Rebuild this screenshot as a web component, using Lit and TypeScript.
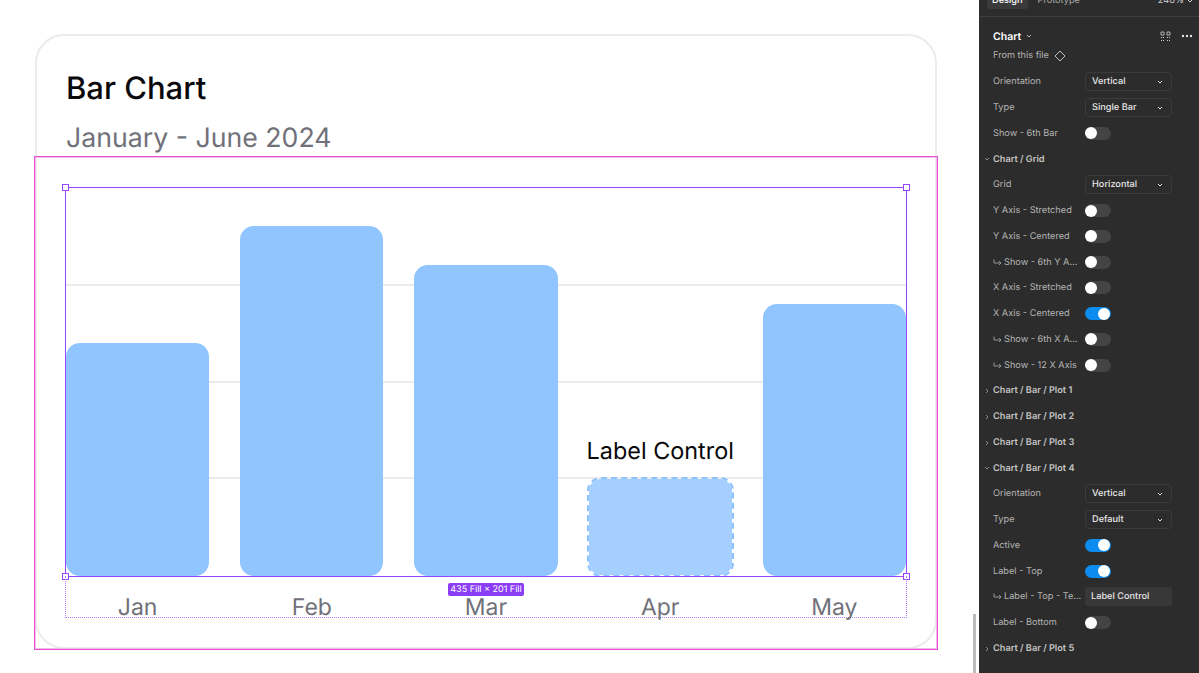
import { LitElement, html, css, svg } from "lit";
import { customElement } from "lit/decorators.js";

type Row =
  | { kind: "select"; label: string; value: string }
  | { kind: "toggle"; label: string; on?: boolean; sub?: boolean }
  | { kind: "input"; label: string; value: string; sub?: boolean }
  | { kind: "section"; label: string; open?: boolean };

const ROWS: Row[] = [
  { kind: "select", label: "Orientation", value: "Vertical" },
  { kind: "select", label: "Type", value: "Single Bar" },
  { kind: "toggle", label: "Show - 6th Bar" },
  { kind: "section", label: "Chart / Grid", open: true },
  { kind: "select", label: "Grid", value: "Horizontal" },
  { kind: "toggle", label: "Y Axis - Stretched" },
  { kind: "toggle", label: "Y Axis - Centered" },
  { kind: "toggle", label: "Show - 6th Y A...", sub: true },
  { kind: "toggle", label: "X Axis - Stretched" },
  { kind: "toggle", label: "X Axis - Centered", on: true },
  { kind: "toggle", label: "Show - 6th X A...", sub: true },
  { kind: "toggle", label: "Show - 12 X Axis", sub: true },
  { kind: "section", label: "Chart / Bar / Plot 1" },
  { kind: "section", label: "Chart / Bar / Plot 2" },
  { kind: "section", label: "Chart / Bar / Plot 3" },
  { kind: "section", label: "Chart / Bar / Plot 4", open: true },
  { kind: "select", label: "Orientation", value: "Vertical" },
  { kind: "select", label: "Type", value: "Default" },
  { kind: "toggle", label: "Active", on: true },
  { kind: "toggle", label: "Label - Top", on: true },
  { kind: "input", label: "Label - Top - Te...", value: "Label Control", sub: true },
  { kind: "toggle", label: "Label - Bottom" },
  { kind: "section", label: "Chart / Bar / Plot 5" },
];

const BARS = [
  { month: "Jan", height: 233 },
  { month: "Feb", height: 350 },
  { month: "Mar", height: 311 },
  { month: "Apr", height: 100, label: "Label Control", ghost: true },
  { month: "May", height: 272 },
];

const chevron = (open: boolean) => html`<svg class="chev" width="6" height="6" viewBox="0 0 6 6">
  ${svg`<path d=${open ? "M1 2l2 2 2-2" : "M2 1l2 2-2 2"} fill="none" stroke="currentColor" stroke-width="1"/>`}
</svg>`;

const hook = html`<svg class="hook" width="9" height="7" viewBox="0 0 9 7">
  ${svg`<path d="M1 .5V4h7M6 2l2 2-2 2" fill="none" stroke="currentColor" stroke-width=".9"/>`}
</svg>`;

@customElement("app-root")
export class AppRoot extends LitElement {
  static styles = css`
    :host {
      display: flex;
      width: 1199px;
      height: 673px;
      overflow: hidden;
      font-family: Inter, "Liberation Sans", sans-serif;
      text-rendering: geometricPrecision;
      background: #fff;
    }

    .canvas {
      position: relative;
      flex: 0 0 979px;
      padding: 34px 0 0 35px;
      box-sizing: border-box;
    }

    .scrollbar {
      position: absolute;
      left: 973px;
      top: 614px;
      bottom: 0;
      width: 3px;
      background: #bdbdbd;
    }

    .card {
      width: 902px;
      height: 615px;
      box-sizing: border-box;
      border: 2px solid #ececec;
      border-radius: 29px;
      padding: 29px 29px 0;
    }

    .title {
      font-size: 31px;
      line-height: 48px;
      font-weight: 500;
      color: #09090b;
    }

    .subtitle {
      font-size: 26.7px;
      line-height: 40px;
      margin-top: 5px;
      color: #71717a;
    }

    .chart {
      position: relative;
      margin-top: 30px;
    }

    .frame {
      position: absolute;
      inset: -32px;
      border: 1px solid #e552d0;
      box-shadow: inset 0 0 0 1px #f6bdec;
      pointer-events: none;
    }

    .plot {
      display: grid;
      height: 388px;
      position: relative;
    }

    .gridlines,
    .bars {
      grid-area: 1 / 1;
      min-width: 0;
    }

    .gridlines {
      display: grid;
      grid-template-rows: repeat(4, 96.4px);
    }

    .gridlines div {
      border-top: 2px solid #ebebeb;
    }

    .gridlines div:first-child {
      border: none;
    }

    .bars {
      display: flex;
      gap: 31px;
      align-items: flex-end;
    }

    .col {
      flex: 1 1 0;
      min-width: 0;
      display: flex;
      flex-direction: column;
      align-items: stretch;
    }

    .bar {
      background: #90c5ff;
      border-radius: 14px;
    }

    .bar.ghost {
      background: #a4cfff padding-box;
      border: 2px dashed #8cc2ff;
      box-sizing: border-box;
      margin: 0 -2px -1px;
    }

    .bar-label {
      font-size: 23.4px;
      line-height: 30px;
      text-align: center;
      color: #09090b;
      margin: 0 -10px 11px;
      white-space: nowrap;
    }

    .selection {
      position: absolute;
      inset: -1px;
      border: 1px solid #9747ff;
      pointer-events: none;
    }

    .handle {
      position: absolute;
      width: 5px;
      height: 5px;
      background: #fff;
      border: 1px solid #9747ff;
    }

    .handle.tl { left: -4px; top: -4px; }
    .handle.tr { right: -4px; top: -4px; }
    .handle.bl { left: -4px; bottom: -4px; }
    .handle.br { right: -4px; bottom: -4px; }

    .axis {
      display: flex;
      gap: 31px;
      height: 42px;
      position: relative;
      border: dotted #b57cff;
      border-width: 0 1px 1px;
      margin: 0 -1px;
      box-sizing: border-box;
    }

    .axis span {
      flex: 1 1 0;
      padding-top: 16px;
      font-size: 23px;
      line-height: 30px;
      text-align: center;
      color: #71717a;
    }

    .badge {
      position: absolute;
      left: 382px;
      top: 7px;
      width: 76px;
      height: 13px;
      border-radius: 2px;
      background: #8b3df5;
      color: #fff;
      font-size: 9px;
      line-height: 13px;
      text-align: center;
      white-space: nowrap;
    }

    .panel {
      flex: 1;
      background: #2c2c2c;
      color: #b4b4b4;
      font-size: 9.2px;
    }

    .tabs {
      display: flex;
      align-items: flex-start;
      height: 17px;
      box-sizing: border-box;
      border-bottom: 1px solid #3d3d3d;
      padding-left: 8px;
      overflow: hidden;
    }

    .tab {
      margin-top: -7px;
      padding: 0 5px;
      height: 16px;
      line-height: 16px;
      border-radius: 3px;
      color: #a8a8a8;
    }

    .tab.active {
      background: #3a3a3a;
      color: #fff;
      font-weight: 500;
      margin-right: 5px;
    }

    .zoom {
      margin-left: auto;
      margin-top: -7px;
      margin-right: 6px;
      line-height: 16px;
      display: flex;
      gap: 3px;
      align-items: center;
      height: 16px;
      color: #d0d0d0;
    }

    .heading {
      display: flex;
      align-items: center;
      height: 20px;
      margin-top: 9px;
      padding: 0 6px 0 14px;
      color: #fff;
      font-size: 10.5px;
      font-weight: 600;
    }

    .heading .chev {
      margin-left: 5px;
      color: #b4b4b4;
    }

    .heading .grid-icon {
      margin-left: auto;
      margin-right: 10px;
    }

    .source {
      display: flex;
      align-items: center;
      gap: 5px;
      height: 13px;
      margin: 3px 0 7px;
      padding-left: 14px;
    }

    .row {
      display: grid;
      grid-template-columns: 92px 87px;
      align-items: center;
      height: 25.75px;
      padding-left: 14px;
      white-space: nowrap;
    }

    .name {
      display: flex;
      align-items: center;
      gap: 2px;
    }

    .hook {
      color: #a0a0a0;
    }

    .section {
      position: relative;
      font-weight: 600;
      color: #c4c4c4;
    }

    .section .chev {
      position: absolute;
      left: 5px;
      top: 10px;
      color: #8a8a8a;
    }

    .select {
      display: flex;
      align-items: center;
      justify-content: space-between;
      height: 19px;
      box-sizing: border-box;
      border: 1px solid #3b3b3b;
      border-radius: 4px;
      padding: 0 8px 0 6px;
      color: #e6e6e6;
      font-weight: 500;
    }

    .select .chev {
      color: #e0e0e0;
    }

    .input {
      height: 19px;
      line-height: 19px;
      border-radius: 3px;
      background: #383838;
      padding-left: 6px;
      color: #e6e6e6;
      font-weight: 500;
    }

    .toggle {
      display: flex;
      align-items: center;
      width: 26px;
      height: 13px;
      border-radius: 7px;
      background: #444;
    }

    .toggle i {
      width: 12px;
      height: 12px;
      border-radius: 50%;
      background: #fff;
    }

    .toggle.on {
      background: #0d8cf0;
      justify-content: flex-end;
    }

    .toggle.on i {
      margin-right: 1px;
    }
  `;

  private renderControl(row: Row) {
    if (row.kind === "select") {
      return html`<div class="select">${row.value}${chevron(true)}</div>`;
    }
    if (row.kind === "input") {
      return html`<div class="input">${row.value}</div>`;
    }
    if (row.kind === "toggle") {
      return html`<div class="toggle ${row.on ? "on" : ""}"><i></i></div>`;
    }
    return null;
  }

  private renderRow(row: Row) {
    if (row.kind === "section") {
      return html`<div class="row section">${chevron(!!row.open)}<span>${row.label}</span></div>`;
    }
    const sub = row.kind !== "select" && row.sub;
    return html`<div class="row">
      <div class="name">${sub ? hook : null}<span>${row.label}</span></div>
      ${this.renderControl(row)}
    </div>`;
  }

  render() {
    return html`
      <div class="canvas">
        <div class="card">
          <div class="title">Bar Chart</div>
          <div class="subtitle">January - June 2024</div>
          <div class="chart">
            <div class="plot">
              <div class="gridlines"><div></div><div></div><div></div><div></div></div>
              <div class="bars">
                ${BARS.map(
                  (b) => html`<div class="col">
                    ${b.label ? html`<div class="bar-label">${b.label}</div>` : null}
                    <div class="bar ${b.ghost ? "ghost" : ""}" style="height:${b.height}px"></div>
                  </div>`
                )}
              </div>
              <div class="selection">
                <div class="handle tl"></div>
                <div class="handle tr"></div>
                <div class="handle bl"></div>
                <div class="handle br"></div>
              </div>
            </div>
            <div class="axis">
              ${BARS.map((b) => html`<span>${b.month}</span>`)}
              <div class="badge">435 Fill × 201 Fill</div>
            </div>
            <div class="frame"></div>
          </div>
        </div>
        <div class="scrollbar"></div>
      </div>
      <aside class="panel">
        <div class="tabs">
          <div class="tab active">Design</div>
          <div class="tab">Prototype</div>
          <div class="zoom">240% ${chevron(true)}</div>
        </div>
        <div class="heading">
          Chart ${chevron(true)}
          <svg class="grid-icon" width="11" height="11" viewBox="0 0 11 11" fill="#cfcfcf">
            <path d="M1 1h3v3H1zM7 1h3v3H7z" fill="none" stroke="#cfcfcf" stroke-width=".8" />
            <path d="M1 6h1v1H1zM3 6h1v1H3zM7 6h1v1H7zM9 6h1v1H9zM1 9h1v1H1zM3 9h1v1H3zM7 9h1v1H7zM9 9h1v1H9z" />
          </svg>
          <svg width="12" height="4" viewBox="0 0 12 4" fill="#e4e4e4">
            <circle cx="2" cy="2" r="1.2" /><circle cx="6" cy="2" r="1.2" /><circle cx="10" cy="2" r="1.2" />
          </svg>
        </div>
        <div class="source">
          From this file
          <svg width="12" height="12" viewBox="0 0 12 12">
            <path d="M6 1l5 5-5 5-5-5z" fill="none" stroke="#cfcfcf" stroke-width=".9" />
          </svg>
        </div>
        ${ROWS.map((r) => this.renderRow(r))}
      </aside>
    `;
  }
}
